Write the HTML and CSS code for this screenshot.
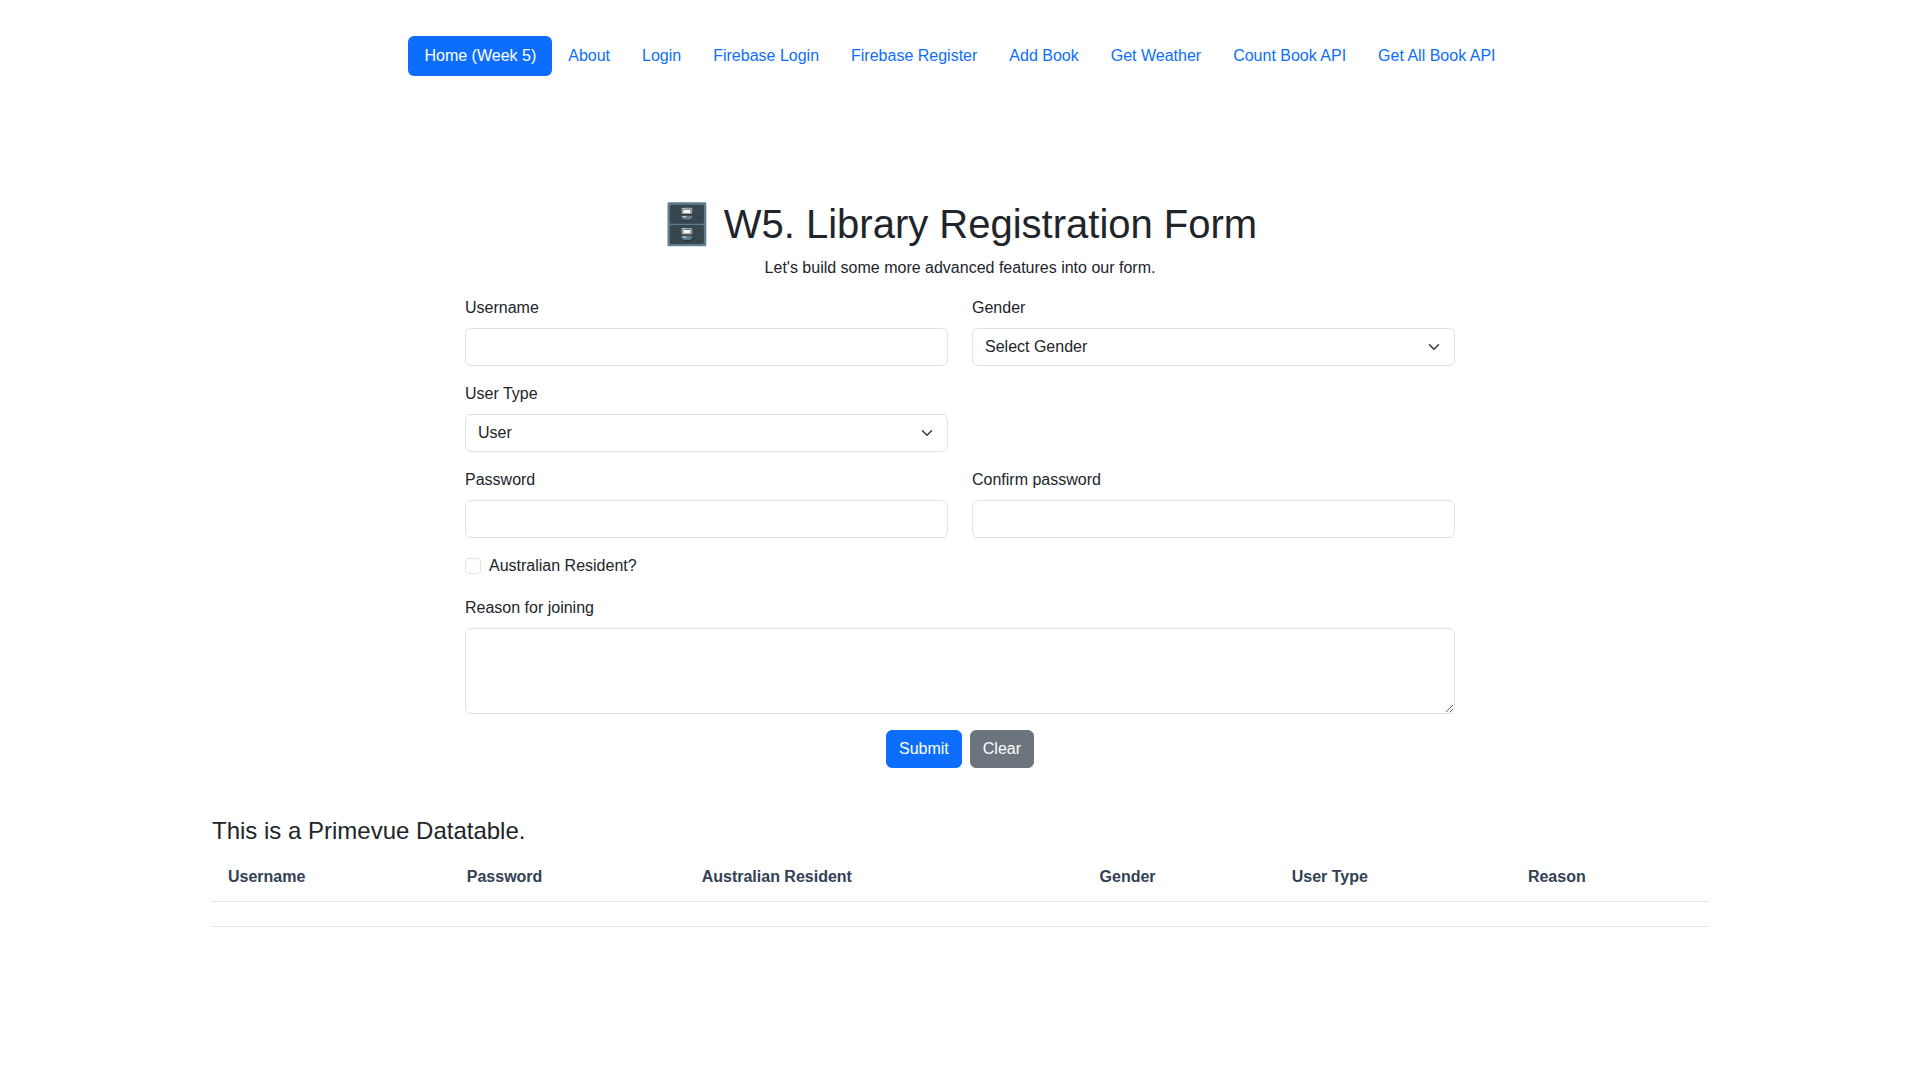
FILE: index.html
```html
<!DOCTYPE html>
<html lang="en">
<head>
  <meta charset="UTF-8">
  <meta name="viewport" content="width=device-width, initial-scale=1">
  <title>Library Registration Form</title>
  <link rel="stylesheet" href="styles.css">
</head>
<body>
  <header class="site-header">
    <nav aria-label="Main">
      <ul class="nav-pills">
        <li><a class="nav-link active" href="#home" aria-current="page">Home (Week 5)</a></li>
        <li><a class="nav-link" href="#about">About</a></li>
        <li><a class="nav-link" href="#login">Login</a></li>
        <li><a class="nav-link" href="#firebase-login">Firebase Login</a></li>
        <li><a class="nav-link" href="#firebase-register">Firebase Register</a></li>
        <li><a class="nav-link" href="#add-book">Add Book</a></li>
        <li><a class="nav-link" href="#get-weather">Get Weather</a></li>
        <li><a class="nav-link" href="#count-book-api">Count Book API</a></li>
        <li><a class="nav-link" href="#get-all-book-api">Get All Book API</a></li>
      </ul>
    </nav>
  </header>

  <main class="page">
    <section class="registration">
      <h1 class="page-title">🗄️ W5. Library Registration Form</h1>
      <p class="lead">Let's build some more advanced features into our form.</p>

      <form class="form">
        <div class="form-row">
          <div class="field">
            <label for="username">Username</label>
            <input class="control" type="text" id="username">
          </div>
          <div class="field">
            <label for="gender">Gender</label>
            <select class="control select" id="gender">
              <option>Select Gender</option>
              <option>Male</option>
              <option>Female</option>
              <option>Other</option>
            </select>
          </div>
        </div>
        <div class="form-row">
          <div class="field">
            <label for="user-type">User Type</label>
            <select class="control select" id="user-type">
              <option>User</option>
              <option>Admin</option>
            </select>
          </div>
        </div>
        <div class="form-row">
          <div class="field">
            <label for="password">Password</label>
            <input class="control" type="password" id="password">
          </div>
          <div class="field">
            <label for="confirm-password">Confirm password</label>
            <input class="control" type="password" id="confirm-password">
          </div>
        </div>
        <div class="check">
          <input class="check-input" type="checkbox" id="resident">
          <label for="resident">Australian Resident?</label>
        </div>
        <div class="field">
          <label for="reason">Reason for joining</label>
          <textarea class="control" id="reason" rows="3"></textarea>
        </div>
        <div class="actions">
          <button class="btn btn-primary" type="submit">Submit</button>
          <button class="btn btn-secondary" type="button">Clear</button>
        </div>
      </form>
    </section>

    <section class="results">
      <h2 class="results-title" id="results-title">This is a Primevue Datatable.</h2>
      <table class="datatable" aria-labelledby="results-title">
        <thead>
          <tr>
            <th scope="col">Username</th>
            <th scope="col">Password</th>
            <th scope="col">Australian Resident</th>
            <th scope="col">Gender</th>
            <th scope="col">User Type</th>
            <th scope="col">Reason</th>
          </tr>
        </thead>
        <tbody>
          <tr><td colspan="6"></td></tr>
        </tbody>
      </table>
    </section>
  </main>
</body>
</html>
```
FILE: styles.css
```css
*,
*::before,
*::after {
  box-sizing: border-box;
}

body {
  margin: 0;
  background: #fff;
  color: #212529;
  font-family: "Liberation Sans", Arial, "Noto Color Emoji", sans-serif;
  font-size: 16px;
  line-height: 24px;
}

.site-header {
  padding: 36px 16px 16px 16px;
}

.nav-pills {
  display: flex;
  flex-wrap: wrap;
  justify-content: center;
  margin: 0;
  padding: 0;
  list-style: none;
}

.nav-link {
  display: block;
  padding: 8px 16px;
  border-radius: 6px;
  color: #0d6efd;
  text-decoration: none;
}

.nav-link.active {
  background: #0d6efd;
  color: #fff;
}

.page {
  max-width: 1520px;
  margin: 0 auto;
  padding: 108px 12px 32px;
}

.registration {
  max-width: 990px;
  margin: 0 auto;
}

.page-title {
  margin: 0 0 8px;
  font-size: 40px;
  font-weight: 500;
  line-height: 48px;
  text-align: center;
}

.lead {
  margin: 0 0 16px;
  text-align: center;
}

.form {
  display: flex;
  flex-direction: column;
  gap: 16px;
}

.form-row {
  display: grid;
  grid-template-columns: 1fr 1fr;
  gap: 24px;
}

.field {
  display: flex;
  flex-direction: column;
  gap: 8px;
}

.control {
  display: block;
  width: 100%;
  min-height: 38px;
  margin: 0;
  padding: 6px 12px;
  border: 1px solid #dee2e6;
  border-radius: 6px;
  background-color: #fff;
  color: #212529;
  font: inherit;
  appearance: none;
}

.select {
  padding-right: 36px;
  background-image: url("data:image/svg+xml,%3csvg xmlns='http://www.w3.org/2000/svg' viewBox='0 0 16 16'%3e%3cpath fill='none' stroke='%23343a40' stroke-linecap='round' stroke-linejoin='round' stroke-width='2' d='m2 5 6 6 6-6'/%3e%3c/svg%3e");
  background-repeat: no-repeat;
  background-position: right 12px center;
  background-size: 16px 12px;
}

textarea.control {
  resize: vertical;
}

.check {
  display: flex;
  gap: 8px;
  padding-bottom: 2px;
}

.check-input {
  width: 16px;
  height: 16px;
  margin: 4px 0 0;
  border: 1px solid #dee2e6;
  border-radius: 4px;
  background: #fff;
  appearance: none;
}

.check-input:checked {
  border-color: #0d6efd;
  background: #0d6efd;
}

.actions {
  display: flex;
  justify-content: center;
  gap: 8px;
}

.btn {
  padding: 6px 12px;
  border: 1px solid transparent;
  border-radius: 6px;
  color: #fff;
  font: inherit;
  cursor: pointer;
}

.btn-primary {
  border-color: #0d6efd;
  background: #0d6efd;
}

.btn-secondary {
  border-color: #6c757d;
  background: #6c757d;
}

.results {
  margin-top: 48px;
}

.results-title {
  margin: 0 0 8px;
  font-size: 24px;
  font-weight: 500;
  line-height: 29px;
}

.datatable {
  width: 100%;
  border-spacing: 0;
  border-collapse: separate;
}

.datatable th {
  padding: 12px 16px;
  border-bottom: 1px solid #e2e8f0;
  color: #334155;
  font-weight: 600;
  text-align: left;
}

.datatable td {
  padding: 12px 16px;
  border-bottom: 1px solid #e2e8f0;
}
```
